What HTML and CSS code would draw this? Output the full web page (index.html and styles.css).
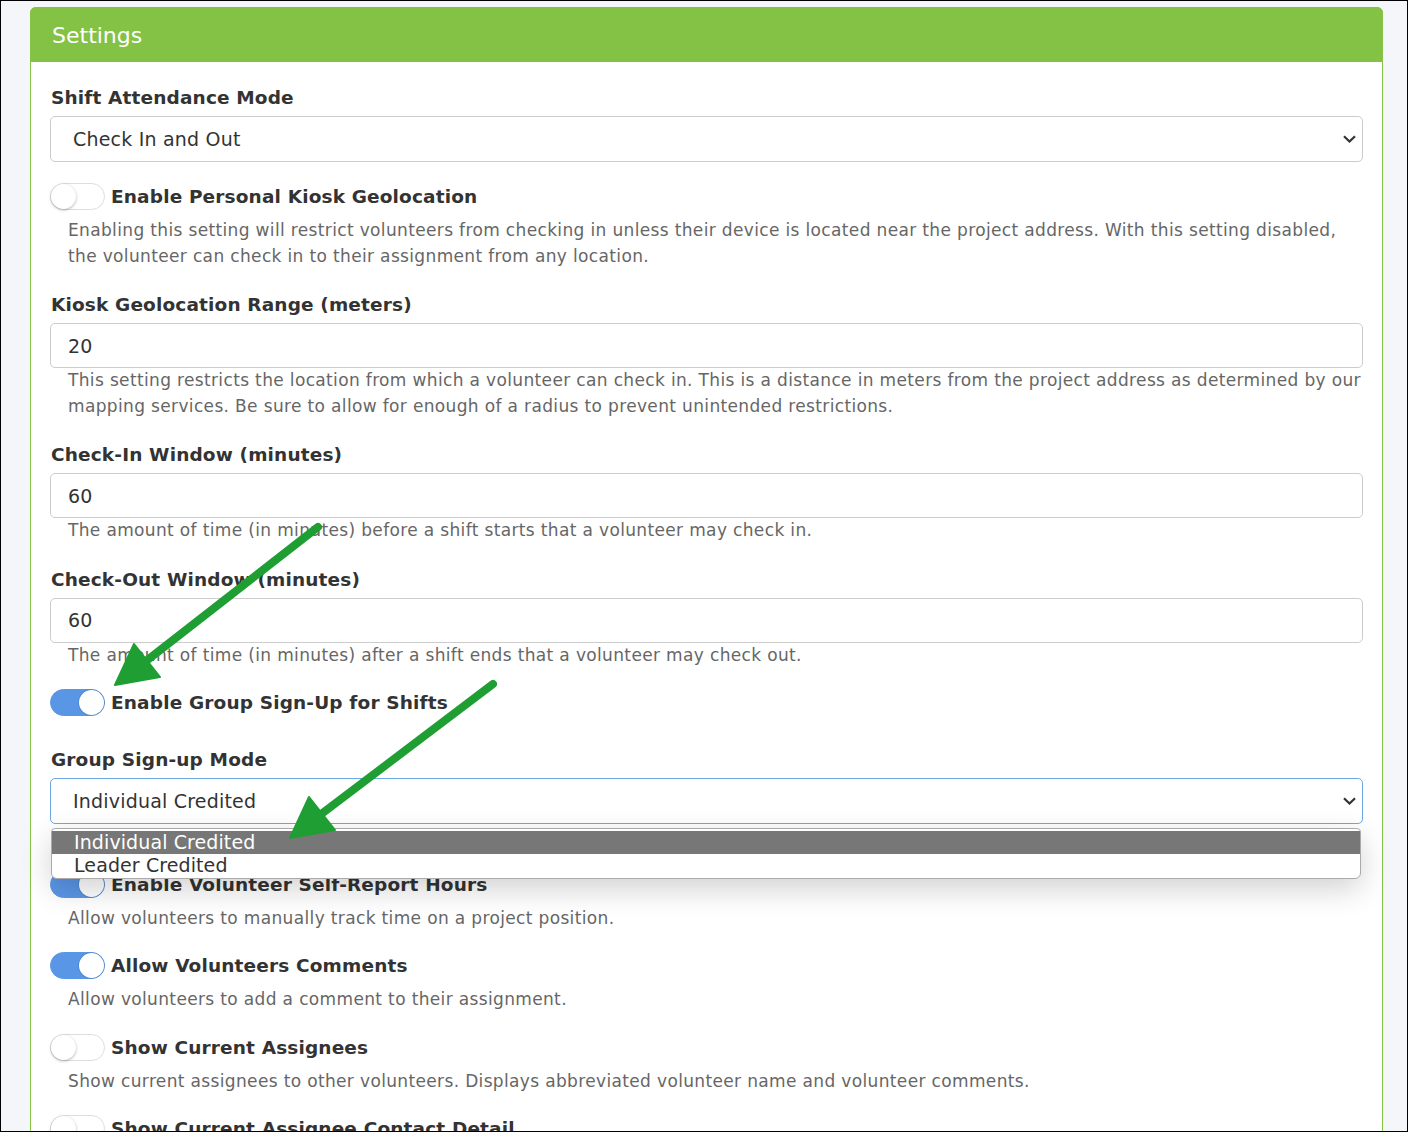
FILE: index.html
```html
<!DOCTYPE html>
<html lang="en">

<head>
    <meta charset="UTF-8">
    <meta name="viewport" content="width=device-width, initial-scale=1.0">
    <title>Settings</title>
    <link rel="stylesheet" href="styles.css">
</head>

<body>
    <div class="frame">

        <section class="card">
            <header class="card-header">Settings</header>

            <div class="card-body">

                <div class="group">
                    <label class="label">Shift Attendance Mode</label>
                    <div class="select">
                        <span>Check In and Out</span>
                        <svg class="chevron" width="13" height="8" viewBox="0 0 13 8"><path d="M1 1.2 6.5 6.5 12 1.2" fill="none" stroke="#333" stroke-width="2.2"/></svg>
                    </div>
                </div>

                <div class="group">
                    <div class="switch-row">
                        <span class="switch"></span>
                        <span class="switch-label">Enable Personal Kiosk Geolocation</span>
                    </div>
                    <p class="help">Enabling this setting will restrict volunteers from checking in unless their device is located near the project address. With this setting disabled, the volunteer can check in to their assignment from any location.</p>
                </div>

                <div class="group">
                    <label class="label">Kiosk Geolocation Range (meters)</label>
                    <div class="input">20</div>
                    <p class="help">This setting restricts the location from which a volunteer can check in. This is a distance in meters from the project address as determined by our mapping services. Be sure to allow for enough of a radius to prevent unintended restrictions.</p>
                </div>

                <div class="group">
                    <label class="label">Check-In Window (minutes)</label>
                    <div class="input">60</div>
                    <p class="help">The amount of time (in minutes) before a shift starts that a volunteer may check in.</p>
                </div>

                <div class="group">
                    <label class="label">Check-Out Window (minutes)</label>
                    <div class="input">60</div>
                    <p class="help">The amount of time (in minutes) after a shift ends that a volunteer may check out.</p>
                </div>

                <div class="group solo">
                    <div class="switch-row">
                        <span class="switch on"></span>
                        <span class="switch-label">Enable Group Sign-Up for Shifts</span>
                    </div>
                </div>

                <div class="group">
                    <label class="label">Group Sign-up Mode</label>
                    <div class="select-wrap">
                        <div class="select focus">
                            <span>Individual Credited</span>
                            <svg class="chevron" width="13" height="8" viewBox="0 0 13 8"><path d="M1 1.2 6.5 6.5 12 1.2" fill="none" stroke="#333" stroke-width="2.2"/></svg>
                        </div>
                        <ul class="dropdown">
                            <li class="active">Individual Credited</li>
                            <li>Leader Credited</li>
                        </ul>
                    </div>
                    <p class="help">Individual credited gives each member of the group their own hours for the shift.</p>
                </div>

                <div class="group">
                    <div class="switch-row">
                        <span class="switch on"></span>
                        <span class="switch-label">Enable Volunteer Self-Report Hours</span>
                    </div>
                    <p class="help">Allow volunteers to manually track time on a project position.</p>
                </div>

                <div class="group">
                    <div class="switch-row">
                        <span class="switch on"></span>
                        <span class="switch-label">Allow Volunteers Comments</span>
                    </div>
                    <p class="help">Allow volunteers to add a comment to their assignment.</p>
                </div>

                <div class="group">
                    <div class="switch-row">
                        <span class="switch"></span>
                        <span class="switch-label">Show Current Assignees</span>
                    </div>
                    <p class="help">Show current assignees to other volunteers. Displays abbreviated volunteer name and volunteer comments.</p>
                </div>

                <div class="group">
                    <div class="switch-row">
                        <span class="switch"></span>
                        <span class="switch-label">Show Current Assignee Contact Detail</span>
                    </div>
                    <p class="help">Show contact details of current assignees to other volunteers.</p>
                </div>

            </div>
        </section>

        <!-- annotation arrows -->
        <svg class="arrows" width="1406" height="1130" viewBox="0 0 1406 1130">
            <g fill="#1f9e33" stroke="#1f9e33" stroke-linecap="round" stroke-linejoin="round">
                <line x1="317" y1="526" x2="140" y2="664" stroke-width="8"/>
                <polygon points="114,684 133,643 159,676" stroke-width="2"/>
                <line x1="492" y1="683" x2="315" y2="817" stroke-width="8"/>
                <polygon points="289,837 308,796 334,829" stroke-width="2"/>
            </g>
        </svg>

    </div>
</body>

</html>
```

FILE: styles.css
```css
* {
    box-sizing: border-box;
    margin: 0;
    padding: 0;
}

body {
    font-family: "DejaVu Sans", Verdana, sans-serif;
    color: #333;
}

.frame {
    position: relative;
    height: 1132px;
    border: 1px solid #000;
    background-color: #f5f6fa;
    overflow: hidden;
    padding: 6px 24px 0 29px;
}

.card {
    background-color: #fff;
    border: 1px solid #84c246;
    border-radius: 6px 6px 0 0;
}

.card-header {
    background-color: #84c246;
    color: #fff;
    font-size: 22px;
    height: 55px;
    line-height: 55px;
    padding: 1px 0 0 22px;
    margin: -1px -1px 0;
    border-radius: 6px 6px 0 0;
}

.card-body {
    padding: 21px 20px 0;
}

.group {
    margin-bottom: 21px;
}

.group.solo {
    margin-bottom: 29px;
}

.label {
    display: block;
    font-size: 18.5px;
    font-weight: bold;
    letter-spacing: .15px;
    line-height: 26px;
    padding-top: 2px;
    margin-bottom: 5px;
}

.select,
.input {
    height: 46px;
    border: 1px solid #ccc;
    border-radius: 5px;
    font-size: 19px;
    letter-spacing: .2px;
    display: flex;
    align-items: center;
    margin: 0 -1px;
}

.select {
    justify-content: space-between;
    padding: 0 6px 0 22px;
}

.select.focus {
    border-color: #6aa9e4;
}

.input {
    height: 45px;
    padding-left: 17px;
}

.select-wrap {
    position: relative;
}

.dropdown {
    position: absolute;
    top: 50px;
    left: 0;
    right: 1px;
    list-style: none;
    background-color: #fff;
    border: 1px solid #aaa;
    border-radius: 4px 4px 6px 6px;
    padding: 2px 0 1px;
    box-shadow: 0 10px 30px rgba(0, 0, 0, .18);
    font-size: 19px;
    letter-spacing: .1px;
    z-index: 2;
}

.dropdown li {
    height: 23px;
    line-height: 23px;
    padding-left: 22px;
}

.dropdown li.active {
    background-color: #777;
    color: #fff;
}

.help {
    font-size: 17px;
    line-height: 25.5px;
    letter-spacing: .35px;
    color: #666;
    padding-left: 17px;
}

.switch-row {
    display: flex;
    align-items: center;
    gap: 6px;
    height: 27px;
    margin: 0 0 8px -1px;
}

.switch {
    position: relative;
    flex: none;
    width: 55px;
    height: 27px;
    border: 1px solid #ddd;
    border-radius: 14px;
    background-color: #fff;
}

.switch::after {
    content: "";
    position: absolute;
    top: 0;
    left: 0;
    width: 25px;
    height: 25px;
    border-radius: 50%;
    background-color: #fff;
    box-shadow: 0 1px 3px rgba(0, 0, 0, .3);
}

.switch.on {
    background-color: #5a96e6;
    border-color: #5a96e6;
}

.switch.on::after {
    left: 28px;
    box-shadow: 0 0 0 1px rgba(0, 0, 0, .1);
}

.switch-label {
    font-size: 18.5px;
    font-weight: bold;
    letter-spacing: .15px;
}

.arrows {
    position: absolute;
    top: 0;
    left: 0;
    pointer-events: none;
    z-index: 5;
}
```
